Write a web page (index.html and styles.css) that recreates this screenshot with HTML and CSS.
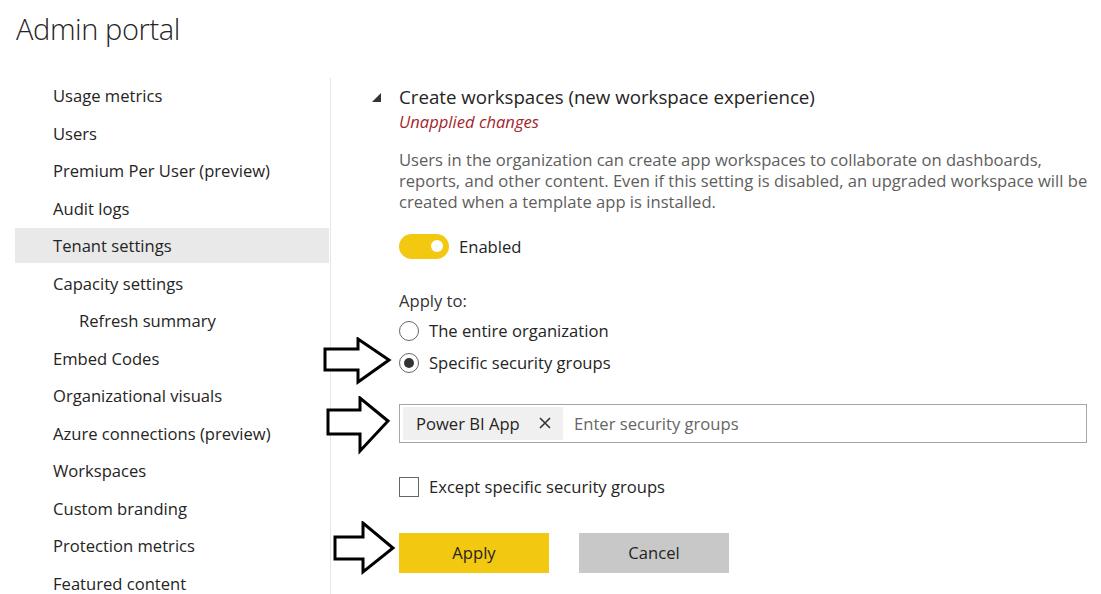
FILE: index.html
```html
<!DOCTYPE html>
<html lang="en">
<head>
<meta charset="utf-8">
<title>Admin portal</title>
<link rel="stylesheet" href="styles.css">
</head>
<body>
<h1 class="page-title">Admin portal</h1>
<div class="layout">
  <nav class="sidebar">
    <ul class="nav-list">
      <li class="nav-item">Usage metrics</li>
      <li class="nav-item">Users</li>
      <li class="nav-item">Premium Per User (preview)</li>
      <li class="nav-item">Audit logs</li>
      <li class="nav-item is-active">Tenant settings</li>
      <li class="nav-item">Capacity settings</li>
      <li class="nav-item nav-sub">Refresh summary</li>
      <li class="nav-item">Embed Codes</li>
      <li class="nav-item">Organizational visuals</li>
      <li class="nav-item">Azure connections (preview)</li>
      <li class="nav-item">Workspaces</li>
      <li class="nav-item">Custom branding</li>
      <li class="nav-item">Protection metrics</li>
      <li class="nav-item">Featured content</li>
    </ul>
  </nav>
  <main class="content">
    <div class="setting-head">
      <span class="caret"></span>
      <h2 class="setting-title">Create workspaces (new workspace experience)</h2>
    </div>
    <div class="unapplied">Unapplied changes</div>
    <p class="desc">Users in the organization can create app workspaces to collaborate on dashboards, reports, and other content. Even if this setting is disabled, an upgraded workspace will be created when a template app is installed.</p>
    <div class="toggle-row">
      <span class="toggle"><span class="knob"></span></span>
      <span class="toggle-label">Enabled</span>
    </div>
    <div class="apply-label">Apply to:</div>
    <div class="radio-row"><span class="radio"></span><span>The entire organization</span></div>
    <div class="radio-row"><span class="radio checked"></span><span>Specific security groups</span></div>
    <div class="picker">
      <span class="chip">Power BI App
        <svg class="chip-x" width="12" height="12" viewBox="0 0 12 12"><path d="M1 1 L11 11 M11 1 L1 11" stroke="#333" stroke-width="1.6" fill="none"/></svg>
      </span>
      <span class="placeholder">Enter security groups</span>
    </div>
    <div class="check-row"><span class="checkbox"></span><span>Except specific security groups</span></div>
    <div class="buttons">
      <button class="btn btn-primary">Apply</button>
      <button class="btn btn-secondary">Cancel</button>
    </div>
  </main>
</div>

<svg class="arrow arrow-1" width="72" height="50" viewBox="0 0 72 50"><path d="M3 12 H36 V2 L67 23 L36 45 V33 H3 Z" fill="#fff" stroke="#000" stroke-width="3" stroke-linejoin="miter"/></svg>
<svg class="arrow arrow-2" width="72" height="60" viewBox="0 0 72 60"><path d="M3 14 H35 V2 L63 25 L35 55 V38 H3 Z" fill="#fff" stroke="#000" stroke-width="3" stroke-linejoin="miter"/></svg>
<svg class="arrow arrow-3" width="72" height="56" viewBox="0 0 72 56"><path d="M3 16 H31 V2 L61 27 L31 51 V38 H3 Z" fill="#fff" stroke="#000" stroke-width="3" stroke-linejoin="miter"/></svg>
</body>
</html>
```
FILE: styles.css
```css
html, body {
  margin: 0;
  padding: 0;
  background: #fff;
  overflow: hidden;
}
body {
  font-family: "Open Sans", "Noto Sans", "Liberation Sans", sans-serif;
  color: #333;
  width: 1101px;
  height: 594px;
  position: relative;
}
.page-title {
  margin: 0;
  padding: 9px 0 0 16px;
  height: 78px;
  box-sizing: border-box;
  font-size: 29px;
  letter-spacing: -0.4px;
  font-weight: 300;
  line-height: 40px;
  color: #252423;
}
.layout {
  display: flex;
  align-items: flex-start;
}
.sidebar {
  width: 316px;
  margin-left: 15px;
  border-right: 1px solid #e6e6e6;
  padding-top: 0;
  height: 520px;
  box-sizing: border-box;
}
.nav-list {
  list-style: none;
  margin: 0;
  padding: 0;
}
.nav-item {
  height: 35px;
  line-height: 35px;
  margin-bottom: 2.5px;
  padding-left: 38px;
  font-size: 16.6px;
  color: #252423;
  white-space: nowrap;
}
.nav-item.is-active {
  background: #e9e9e9;
  margin-right: 1px;
}
.nav-item.nav-sub {
  padding-left: 64px;
}
.content {
  padding: 7px 0 0 68px;
  flex: 1;
  font-size: 16.6px;
}
.setting-head {
  display: flex;
  align-items: center;
  margin-left: -27px;
  height: 24px;
}
.caret {
  width: 0;
  height: 0;
  border-style: solid;
  border-width: 0 0 9px 9px;
  border-color: transparent transparent #333 transparent;
  margin-right: 18px;
}
.setting-title {
  margin: 0;
  font-size: 18.7px;
  font-weight: 400;
  line-height: 24px;
  color: #252423;
}
.unapplied {
  margin-top: 2px;
  font-style: italic;
  color: #a4262c;
  line-height: 22px;
}
.desc {
  margin: 15.5px 0 0 0;
  width: 690px;
  line-height: 21px;
  color: #605e5c;
}
.toggle-row {
  display: flex;
  align-items: center;
  margin-top: 22px;
  height: 25px;
}
.toggle {
  width: 50px;
  height: 25px;
  border-radius: 13px;
  background: #f2c811;
  position: relative;
  margin-right: 10px;
}
.knob {
  position: absolute;
  width: 12px;
  height: 12px;
  border-radius: 50%;
  background: #fff;
  top: 6.5px;
  right: 6px;
}
.toggle-label { color: #252423; }
.apply-label {
  margin-top: 31px;
  line-height: 22px;
}
.radio-row, .check-row {
  display: flex;
  align-items: center;
  height: 32px;
  color: #252423;
}
.apply-label + .radio-row { margin-top: 3px; }
.radio {
  width: 20px;
  height: 20px;
  border: 1px solid #666;
  border-radius: 50%;
  box-sizing: border-box;
  margin-right: 10px;
  position: relative;
}
.radio.checked::after {
  content: "";
  position: absolute;
  width: 10px;
  height: 10px;
  border-radius: 50%;
  background: #333;
  top: 4px;
  left: 4px;
}
.picker {
  margin-top: 25px;
  width: 688px;
  height: 39px;
  border: 1px solid #a6a6a6;
  box-sizing: border-box;
  display: flex;
  align-items: center;
  padding-left: 3px;
}
.chip {
  display: flex;
  align-items: center;
  height: 33px;
  width: 160px;
  box-sizing: border-box;
  background: #f0f0f0;
  padding-left: 13px;
  color: #252423;
}
.chip-x {
  margin-left: auto;
  margin-right: 12px;
}
.placeholder {
  margin-left: 11px;
  color: #666;
}
.check-row {
  margin-top: 33px;
  height: 22px;
}
.checkbox {
  width: 20px;
  height: 20px;
  border: 1px solid #666;
  box-sizing: border-box;
  margin-right: 10px;
}
.buttons {
  display: flex;
  gap: 30px;
  margin-top: 35px;
}
.btn {
  width: 150px;
  height: 40px;
  border: none;
  font-family: inherit;
  font-size: 16.6px;
  color: #252423;
}
.btn-primary { background: #f2c811; }
.btn-secondary { background: #c8c8c8; }
.arrow {
  position: absolute;
}
.arrow-1 { left: 322px; top: 337px; }
.arrow-2 { left: 325px; top: 396px; }
.arrow-3 { left: 332px; top: 521px; }
```
